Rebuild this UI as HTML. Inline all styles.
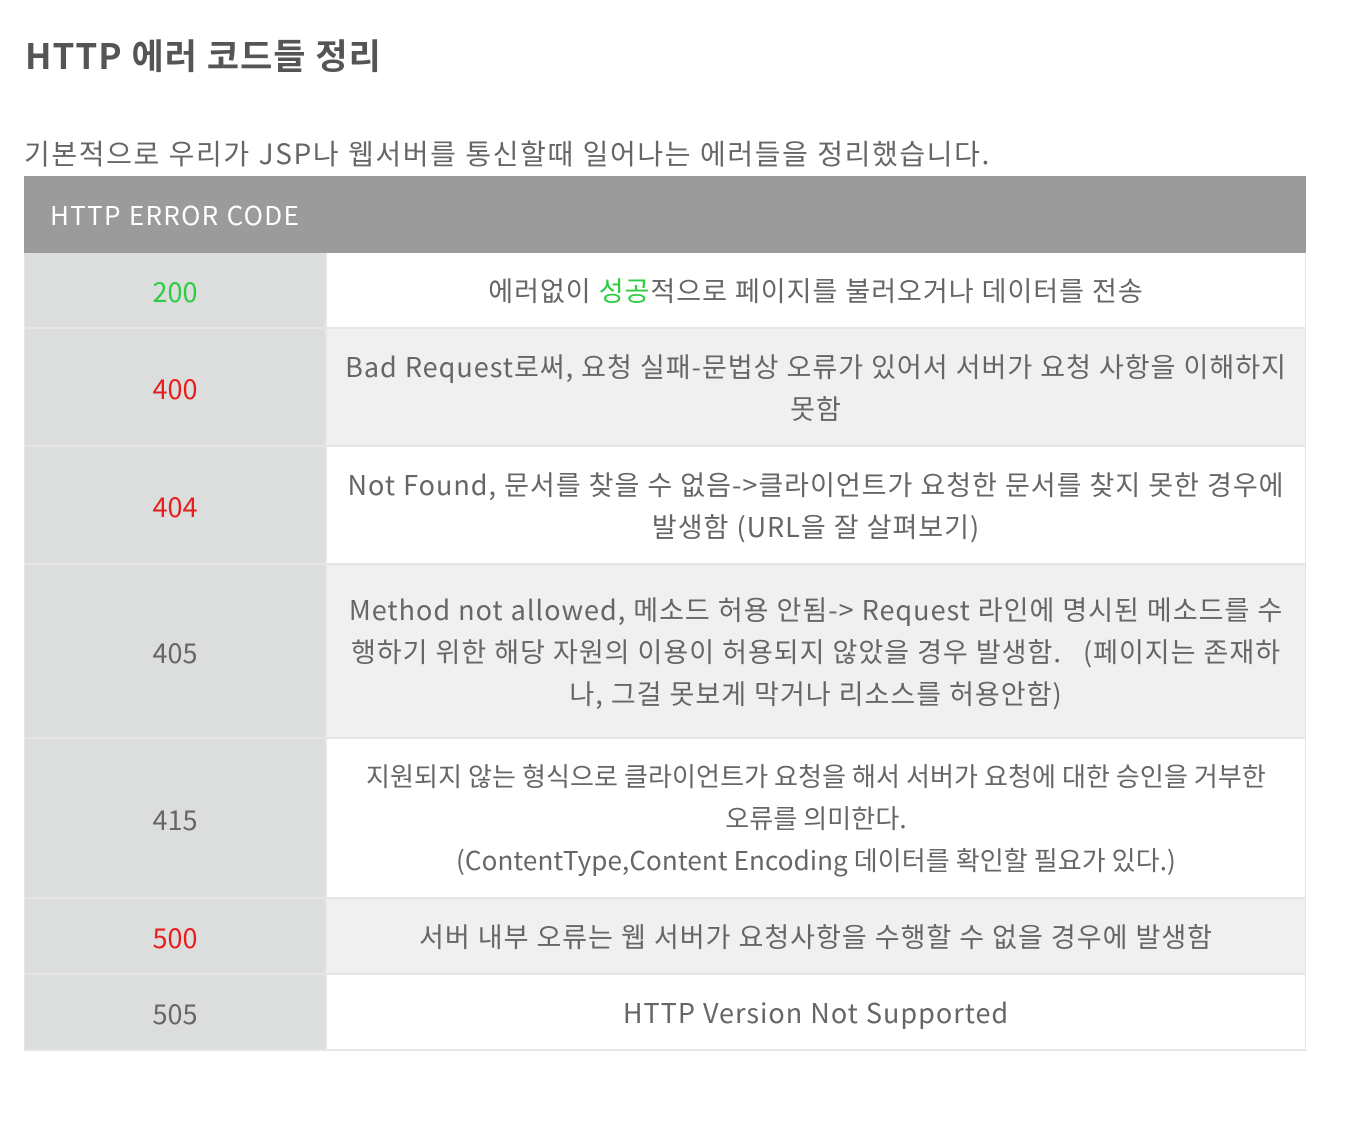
<!DOCTYPE html>
<html><head><meta charset="utf-8"><style>
body{margin:0;background:#fff;font-family:"Liberation Sans","Noto Sans CJK KR",sans-serif;color:#666;}
.t{position:absolute;left:25px;top:30px;font-size:35px;font-weight:bold;color:#555;line-height:50px;letter-spacing:1px;font-family:"Noto Sans CJK KR","Liberation Sans",sans-serif;}
.p{position:absolute;left:24px;top:131px;font-size:28px;line-height:44px;letter-spacing:1.6px;color:#666;font-family:"Noto Sans CJK KR",sans-serif;}
.tb{position:absolute;left:24px;top:176px;width:1282px;}
.hd{height:77px;background:#9b9b9b;color:#fff;font-size:26px;line-height:77px;padding-left:26px;letter-spacing:1.3px;font-family:"Noto Sans CJK KR",sans-serif;}
.r{display:flex;border-bottom:2px solid #e6e6e6;box-sizing:border-box;}
.c1{width:300px;background:#dcdddd;border-right:2px solid #e6e6e6;border-left:1px solid #e6e6e6;display:flex;align-items:center;justify-content:center;font-size:27px;font-family:"Noto Sans CJK KR",sans-serif;}
.c2{flex:1;display:flex;align-items:center;justify-content:center;text-align:center;font-size:27px;letter-spacing:1px;line-height:42px;font-family:"Noto Sans CJK KR",sans-serif;border-right:1px solid #e6e6e6;white-space:nowrap;}
.w{background:#fff}.g{background:#f0f0f0}
.gr{color:#2ecc40}.rd{color:#e81e1e}
</style></head><body>
<div class="t">HTTP 에러 코드들 정리</div>
<div class="p">기본적으로 우리가 JSP나 웹서버를 통신할때 일어나는 에러들을 정리했습니다.</div>
<div class="tb">
<div class="hd">HTTP ERROR CODE</div>
<div class="r" style="height:76px"><div class="c1 gr">200</div><div class="c2 w"><span>에러없이 <span class="gr">성공</span>적으로 페이지를 불러오거나 데이터를 전송</span></div></div>
<div class="r" style="height:118px"><div class="c1 rd">400</div><div class="c2 g"><span>Bad Request로써, 요청 실패-문법상 오류가 있어서 서버가 요청 사항을 이해하지<br>못함</span></div></div>
<div class="r" style="height:118px"><div class="c1 rd">404</div><div class="c2 w"><span>Not Found, 문서를 찾을 수 없음-&gt;클라이언트가 요청한 문서를 찾지 못한 경우에<br>발생함 (URL을 잘 살펴보기)</span></div></div>
<div class="r" style="height:174px"><div class="c1">405</div><div class="c2 g"><span>Method not allowed, 메소드 허용 안됨-&gt; Request 라인에 명시된 메소드를 수<br>행하기 위한 해당 자원의 이용이 허용되지 않았을 경우 발생함. &nbsp;&nbsp;(페이지는 존재하<br>나, 그걸 못보게 막거나 리소스를 허용안함)</span></div></div>
<div class="r" style="height:160px"><div class="c1">415</div><div class="c2 w" style="font-size:26px;letter-spacing:0.1px"><span>지원되지 않는 형식으로 클라이언트가 요청을 해서 서버가 요청에 대한 승인을 거부한<br>오류를 의미한다.<br>(ContentType,Content Encoding 데이터를 확인할 필요가 있다.)</span></div></div>
<div class="r" style="height:76px"><div class="c1 rd">500</div><div class="c2 g"><span>서버 내부 오류는 웹 서버가 요청사항을 수행할 수 없을 경우에 발생함</span></div></div>
<div class="r" style="height:76px"><div class="c1">505</div><div class="c2 w"><span>HTTP Version Not Supported</span></div></div>
</div>
</body></html>
